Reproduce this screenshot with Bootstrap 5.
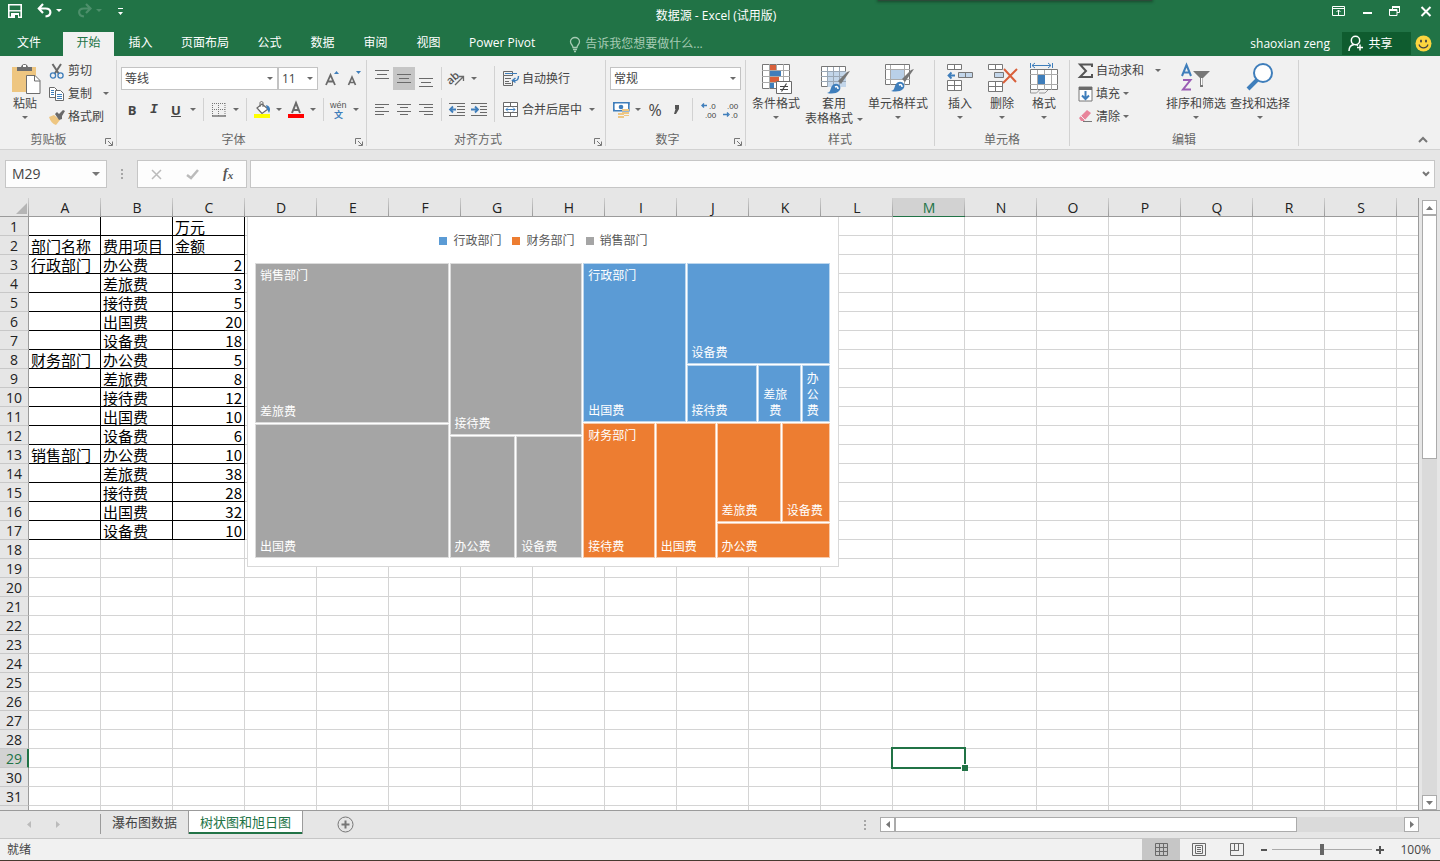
<!DOCTYPE html>
<html lang="zh-CN">
<head>
<meta charset="utf-8">
<meta name="viewport" content="width=device-width, initial-scale=1">
<title>数据源 - Excel (试用版)</title>
<link rel="stylesheet" href="https://cdn.jsdelivr.net/npm/bootstrap@5.3.0/dist/css/bootstrap.min.css">
<style>
:root{--green:#217346;--ink:#444;--ico:#6a6a6a;--blue:#3f7ebb}
body{font:12px/16px "Open Sans","Noto Sans CJK SC",sans-serif;color:var(--ink);background:#e6e6e6}
svg{display:block;flex:none;overflow:visible}
button,input,select{font:inherit;color:inherit}
.plain{border:0;background:none;padding:0;display:flex;align-items:center;justify-content:center;white-space:nowrap}
.app-head{background:var(--green);color:#fff}
.titlebar{height:32px}
.titlebar .side{flex:1 1 0}
.winbtns{padding-top:2px}
.desk-shadow{left:61%;width:19%;top:0;height:1px;background:#2b4a38;box-shadow:0 0 3px 1px #18492d}
.tabrow{height:24px}
.rtab{color:#fff;text-decoration:none;height:24px;line-height:22px;padding:0 14px;min-width:53px;text-align:center;white-space:nowrap}
.rtab.file{width:58px;margin-right:5px}
.rtab.on{background:#f1f1f1;color:var(--green);min-width:51px;padding:0 13px}
.tell{color:#a6cbb4;width:170px}
.tell input{border:0;background:none;padding:0;width:130px;color:inherit;outline:0}
.tell input::placeholder{color:#a6cbb4;opacity:1}
.share{background:#0f5c2f;width:69px;height:23px;padding-right:12px;gap:4px;color:#fff}
.ribbon{background:#f1f1f1;border-bottom:1px solid #d2d2d2;height:94px;padding:4px 0}
.rgroup{border-right:1px solid #d2d2d2;padding:0 4px;height:86px;flex:none;position:relative}
.rgroup.clip{padding-left:1px}
.rbody{height:74px}
.rname{height:12px;line-height:12px;text-align:center;color:#666;padding-right:16px}
.launch{position:absolute;right:3px;bottom:0}
.big{flex-direction:column;justify-content:flex-start;padding-top:3px;line-height:15px}
.big svg.pic{margin-bottom:1px}
.big>.caret{margin-top:2px}
.w42{width:42px}.w48{width:48px}.w52{width:52px}.w64{width:64px}
.smalls{gap:2px}
.smalls .plain{height:21px;gap:3px;justify-content:flex-start}
.tools{gap:8px;padding-top:7px}
.tools .line{height:23px;display:flex}
.tools .line>*{flex-shrink:0}
.tb{width:22px;height:23px}
.tb.on{background:#c6c6c6}
.glyph{font-size:13px}
.dd{width:12px;height:23px}
.dd::after,.caret::after{content:"";border:3px solid transparent;border-top-color:#6a6a6a;border-bottom:0}
.caret{display:flex;justify-content:center;align-items:center;height:9px}
.vr1{width:1px;margin:0 4px;background:#d2d2d2}
.vr1.long{height:56px;margin-top:6px}
.pick{border:1px solid #c3c3c3;border-radius:0;height:23px;padding:0 3px;appearance:none;outline:0;background:#fff url("data:image/svg+xml,%3Csvg xmlns='http://www.w3.org/2000/svg' width='6' height='3'%3E%3Cpath d='M0 0h6L3 3z' fill='%236a6a6a'/%3E%3C/svg%3E") no-repeat right 4px center}
.w157{width:157px}.w40{width:40px}.w131{width:131px}
.fx{height:48px;padding:10px 5px 10px}
.fxbox{border:1px solid #c6c6c6;background:#fdfdfd;height:28px}
.namebox{width:102px}
.namebox input{width:82px;border:0;background:none;padding:0 0 0 6px;font-size:14px;outline:0}
.fxbtns{width:110px}
.fxbtns .plain{flex:1}
.fxline{margin-left:3px}
.dots{width:30px;gap:2px}
.dots.slim{width:12px}
.dots i{width:2px;height:2px;background:#a6a6a6}
.work{min-height:0}
.gridwrap{overflow:hidden;position:relative;border-right:1px solid #9b9b9b;margin-right:3px;min-width:0}
.cells{table-layout:fixed;border-collapse:separate;border-spacing:0;width:1469px;background:#fff;font:15px/16px "Noto Sans CJK SC",sans-serif;color:#000}
.cells th,.cells td{height:19px;padding:2px 2px 0;border:0 solid #d4d4d4;border-width:0 1px 1px 0;white-space:nowrap}
.cells th{background:#e6e6e6;text-align:center;font:14px/16px "Open Sans",sans-serif;color:#222}
.cells thead th{border-bottom-color:#9b9b9b;border-right:0;background:linear-gradient(#d0d0d0,#9b9b9b) right/1px 100% no-repeat #e6e6e6}
.cells tbody th{border-right-color:#9b9b9b;border-bottom-color:#c8c8c8}
.cells thead th.hot{background-color:#d2d2d2;color:var(--green);border-bottom-color:var(--green)}
.cells tbody th.hot{background:#d2d2d2;color:var(--green);border-right:2px solid var(--green);padding-right:1px}
.cells td.filled{border-color:#000}
.cells td.num{text-align:right}
.cells td.cur{position:relative}
.cells td.cur::before{content:"";position:absolute;inset:-2px;border:2px solid var(--green)}
.cells td.cur::after{content:"";position:absolute;right:-4px;bottom:-4px;width:7px;height:7px;background:var(--green);border:1px solid #fff;border-width:1px 0 0 1px}
.chartbox{left:247px;top:19px;width:592px;height:350px;background:#fff;border:1px solid #d9d9d9;border-top:0;padding:16px 8px 8px 7px;color:#595959}
.legend{gap:11px;height:16px;margin-bottom:14px;padding-left:2px}
.legend span{display:flex;align-items:center;gap:6px}
.legend i{width:8px;height:8px}
.tree,.split{display:grid;min-width:0;min-height:0;gap:1px}
.tree{flex:1}
.tile{display:flex;flex-direction:column;justify-content:space-between;align-items:flex-start;border:1px solid #ffffff99;background-clip:border-box;padding:4px 4px 2px;min-width:0;min-height:0;color:#fff;text-align:center;white-space:pre}
.tile b{font-weight:400}
.c-a{background-color:#5b9bd5}.c-b{background-color:#ed7d31}.c-c{background-color:#a5a5a5}
.vscroll{width:15px;margin:2px 3px 0 0}
.sbtn{width:15px;height:15px;background:#fff;border:1px solid #ababab}
.track{background:#dadada}
.thumb{background:#fff;border:1px solid #ababab}
.vscroll .thumb{height:42%;width:15px}
.sheets{height:28px;border-top:1px solid #9b9b9b;font-size:13px}
.sheets .left{width:60%}
.shead{width:100px;padding-left:27px;gap:23px}
.stab{color:var(--ink);text-decoration:none;height:23px;line-height:22px;padding:0 11px;white-space:nowrap}
.stab.on{background:#fff;color:var(--green);border:solid #9b9b9b;border-width:0 1px;box-shadow:inset 0 -2px var(--green)}
.sline{width:1px;height:20px;margin-top:3px;background:#9b9b9b}
.hscroll{margin:6px 21px 0 0;height:15px;min-width:0}
.hscroll .thumb{width:79%;height:15px}
.status{background:#f1f1f1;border-top:1px solid #c6c6c6;border-bottom:1px solid #463a30;height:23px;padding:0 9px 0 7px}
.view{width:38px;height:21px}
.view.on{background:#c6c6c6}
.zoom{appearance:none;width:100px;height:12px;background:linear-gradient(#aaa,#aaa) center/100% 1px no-repeat;margin:0}
.zoom::-webkit-slider-thumb{appearance:none;width:4px;height:11px;background:#666}
</style>
</head>
<body class="vh-100 d-flex flex-column overflow-hidden">
<header class="app-head position-relative">
  <div class="desk-shadow position-absolute"></div>
  <div class="titlebar d-flex">
    <div class="side d-flex pt-1">
      <button class="plain ms-2 align-self-start" aria-label="保存"><svg width="14" height="14" fill="none" stroke="#fff"><path d="M.8.8h12.4v12.4H.8z" stroke-width="1.6"/><path d="M1 6.8h12" stroke-width="1.4"/><path d="M3 9h8v5H3z" fill="#fff" stroke="none"/><path d="M7 11h3v3H7z" fill="#217346" stroke="none"/></svg></button>
      <button class="plain ms-3 align-self-start" aria-label="撤消"><svg width="24" height="14" fill="none"><path d="M5 0 .8 4.500 5 9M1 4.500h6.500c6.500 0 6.500 7 0 8" stroke="#fff" stroke-width="2.200"/><path d="M18 5h6l-3 3z" fill="#fff"/></svg></button>
      <button class="plain ms-3 align-self-start" aria-label="恢复"><svg width="24" height="14" fill="none"><path d="m8 0 4.500 4.500L8 9M12 4.500H6c-6.500 0-6.500 7 0 8" stroke="#4d8f6b" stroke-width="2.200"/><path d="M18 5h6l-3 3z" fill="#4d8f6b"/></svg></button>
      <button class="plain ms-3 align-self-start pt-1" aria-label="自定义快速访问工具栏"><svg width="5" height="8" fill="#fff"><path d="M0 0h5v1H0zM0 4h5L2.500 7z"/></svg></button>
    </div>
    <div class="lh-lg pt-1">数据源 - Excel (试用版)</div>
    <div class="side winbtns d-flex justify-content-end align-items-start pe-2 gap-3">
      <button class="plain pt-1" aria-label="功能区显示选项"><svg width="13" height="10" fill="none" stroke="#fff"><path d="M.5.5h12v9H.5zM.5 2.500h12M6.500 9V4M4.500 6l2-2 2 2"/></svg></button>
      <button class="plain pt-2" aria-label="最小化"><svg width="12" height="6"><path d="M2 2h9v2H2z" fill="#fff"/></svg></button>
      <button class="plain pt-1" aria-label="还原"><svg width="11" height="10" fill="none" stroke="#fff"><path d="M3.500 3V.5h7v6H8M.5 3.500H8v6H.5z"/><path d="M3 1h8M0 4h8" stroke-width="2"/></svg></button>
      <button class="plain ms-1 pt-1" aria-label="关闭"><svg width="12" height="11" fill="none" stroke="#fff" stroke-width="2"><path d="m1.500 1 9 9m0-9-9 9"/></svg></button>
    </div>
  </div>
  <nav class="tabrow d-flex align-items-start">
    <a class="rtab file" href="#">文件</a><a class="rtab on" href="#">开始</a><a class="rtab" href="#">插入</a><a class="rtab" href="#">页面布局</a><a class="rtab" href="#">公式</a><a class="rtab" href="#">数据</a><a class="rtab" href="#">审阅</a><a class="rtab" href="#">视图</a><a class="rtab" href="#">Power Pivot</a>
    <label class="tell d-flex align-items-center ms-3 ps-1 pt-1 gap-1"><svg width="12" height="15" fill="none" stroke="#a6cbb4"><path d="M4 10.500C4 8 1.500 7.500 1.500 4.800a4.500 4.300 0 0 1 9 0C10.500 7.500 8 8 8 10.500zM4 12.500h4M5 14.500h2" stroke-width="1.300"/></svg><input type="text" placeholder="告诉我您想要做什么..." aria-label="告诉我您想要做什么"></label>
    <div class="ms-auto d-flex">
      <a class="text-white text-decoration-none me-2 pe-1 pt-1" href="#">shaoxian zeng</a>
      <button class="plain share"><svg width="16" height="17" fill="none" stroke="#fff" stroke-width="1.500"><circle cx="7.500" cy="5.500" r="4.200"/><path d="M1 16c0-4 2-6 5-6.500M8.500 9.700l1.500.8M12 9.500v6M9 12.500h6"/></svg>共享</button>
      <button class="plain ms-1 me-1 pe-1" aria-label="反馈"><svg width="17" height="17"><circle cx="8.500" cy="8.500" r="8" fill="#fcd53f"/><ellipse cx="6" cy="6" rx="1" ry="1.500" fill="#444"/><ellipse cx="11" cy="6" rx="1" ry="1.500" fill="#444"/><path d="M4 9.500c1.500 4.500 7.500 4.500 9 0" fill="none" stroke="#444" stroke-width="1.200"/></svg></button>
    </div>
  </nav>
</header>

<section class="ribbon d-flex" aria-label="功能区">
  <div class="rgroup clip" style="width:117px">
    <div class="rbody d-flex">
      <button class="plain big w48 align-self-start"><svg class="pic" width="32" height="32"><path d="M3 4h24v25H3z" fill="#eec681"/><path d="M8 8V4h4c1-4 6-4 7 0h4v4z" fill="#6d6d6d"/><path d="M14 2h3v2h-3z" fill="#fff"/><path d="M17.500 12.500H26l5 5v13H17.500z" fill="#fff" stroke="#6d6d6d"/><path d="M25.500 12.500V18H31" fill="none" stroke="#6d6d6d"/></svg>粘贴<span class="caret"></span></button>
      <div class="smalls d-flex flex-column">
        <button class="plain"><svg width="16" height="16" fill="none"><path d="M3.500 1 10 11M12 1 5.500 11" stroke="#6a6a6a" stroke-width="2"/><circle cx="4" cy="12.500" r="2.600" stroke="#3f7ebb" stroke-width="1.300"/><circle cx="11.500" cy="12.500" r="2.600" stroke="#3f7ebb" stroke-width="1.300"/></svg>剪切</button>
        <button class="plain"><svg width="16" height="16" fill="#fff" stroke="#6a6a6a"><path d="M.5 1.500h5l3 3v7h-8z"/><path d="M6.500 4.500h5l3 3v7h-8z"/><path d="M2 4.500h3M2 6.500h3M2 8.500h3M8 8.500h5M8 10.500h5M8 12.500h5" stroke="#3f7ebb"/></svg>复制<span class="caret ps-2"></span></button>
        <button class="plain"><svg width="16" height="16"><path d="m0 8 5-2 6 5-4 5C4 15 1 12 0 8z" fill="#eec681"/><path d="m6 5 2-2 2 2 4-4 2 1-3 5 0 3-3 1z" fill="#6a6a6a"/></svg>格式刷</button>
      </div>
    </div>
    <div class="rname">剪贴板</div><svg class="launch" width="8" height="8" fill="none" stroke="#777"><path d="M.5 6V.5H6M3 3l4 4M7.500 3.500v4h-4"/></svg>
  </div>

  <div class="rgroup" style="width:250px">
    <div class="rbody d-flex flex-column tools">
      <div class="line"><select class="pick w157" aria-label="字体"><option>等线</option></select><select class="pick w40" aria-label="字号"><option>11</option></select>
        <button class="plain tb ms-1" aria-label="增大字号"><svg width="18" height="16" fill="none" stroke="#6a6a6a" stroke-width="1.800"><path d="m2 14 4.500-10L11 14M3.500 10.500h6"/><path d="M10 3h5l-2.500-3z" fill="#3f7ebb" stroke="none"/></svg></button>
        <button class="plain tb" aria-label="减小字号"><svg width="18" height="16" fill="none" stroke="#6a6a6a" stroke-width="1.700"><path d="m2.500 14 3.500-8 3.500 8M4 11.500h4"/><path d="M10 0h5l-2.500 3z" fill="#3f7ebb" stroke="none"/></svg></button></div>
      <div class="line">
        <button class="plain tb glyph fw-bold" aria-label="加粗">B</button><button class="plain tb glyph fst-italic fw-bold font-monospace" aria-label="倾斜">I</button><button class="plain tb glyph fw-bold text-decoration-underline" aria-label="下划线">U</button><button class="plain dd" aria-label="下划线选项"></button><span class="vr1"></span>
        <button class="plain tb" aria-label="边框"><svg width="14" height="14" fill="none" stroke="#777"><path d="M0 .5h14M0 6.500h14M.5 0v13M6.500 0v13M13 0v13" stroke-dasharray="1 1"/><path d="M0 13h14" stroke-width="1.500"/></svg></button><button class="plain dd" aria-label="边框选项"></button><span class="vr1"></span>
        <button class="plain tb" aria-label="填充颜色"><svg width="17" height="17"><path d="m3 7 5-4 6 5-6 4.500z" fill="#fff" stroke="#6a6a6a" stroke-width="1.200"/><path d="M6 6V2c0-2 3-2 3 0v4" fill="none" stroke="#6a6a6a"/><path d="M12 4c4 1 5 4 3 8l-2-4z" fill="#3f7ebb"/><path d="M0 13h16v4H0z" fill="#ff0"/></svg></button><button class="plain dd" aria-label="填充颜色选项"></button>
        <button class="plain tb" aria-label="字体颜色"><svg width="16" height="17"><path d="M4 12 8 2l4 10M5.500 9h5" fill="none" stroke="#6a6a6a" stroke-width="2"/><path d="M0 13h16v4H0z" fill="red"/></svg></button><button class="plain dd" aria-label="字体颜色选项"></button><span class="vr1"></span>
        <button class="plain tb" aria-label="拼音"><svg width="18" height="20"><text x="0" y="8" font-size="9" font-family="Liberation Sans" fill="#555">wén</text><text x="4" y="18" font-size="9" font-weight="700" fill="#3f7ebb">文</text></svg></button><button class="plain dd" aria-label="拼音选项"></button>
      </div>
    </div>
    <div class="rname">字体</div><svg class="launch" width="8" height="8" fill="none" stroke="#777"><path d="M.5 6V.5H6M3 3l4 4M7.500 3.500v4h-4"/></svg>
  </div>

  <div class="rgroup" style="width:239px">
    <div class="rbody d-flex">
      <div class="d-flex flex-column tools">
        <div class="line">
          <button class="plain tb" aria-label="顶端对齐"><svg width="14" height="17" stroke="#6a6a6a"><path d="M0 .5h14M2 4.500h10M0 8.500h14"/></svg></button><button class="plain tb on" aria-label="垂直居中"><svg width="14" height="17" stroke="#6a6a6a"><path d="M0 4.500h14M2 8.500h10M0 12.500h14"/></svg></button><button class="plain tb" aria-label="底端对齐"><svg width="14" height="17" stroke="#6a6a6a"><path d="M0 8.500h14M2 12.500h10M0 16.500h14"/></svg></button><span class="vr1"></span>
          <button class="plain tb" aria-label="方向"><svg width="20" height="20"><text x="0" y="12" font-size="11" font-weight="600" fill="#555" transform="rotate(-42 7 10)">ab</text><path d="m8 16 8-8M12 7.500h4.500V12" stroke="#6a6a6a" fill="none" stroke-width="1.300"/></svg></button><button class="plain dd" aria-label="方向选项"></button>
        </div>
        <div class="line">
          <button class="plain tb" aria-label="左对齐"><svg width="14" height="12" stroke="#6a6a6a"><path d="M0 .5h14M0 3.500h9M0 7.500h14M0 10.500h9"/></svg></button><button class="plain tb" aria-label="居中"><svg width="14" height="12" stroke="#6a6a6a"><path d="M0 .5h14M3 3.500h8M0 7.500h14M3 10.500h8"/></svg></button><button class="plain tb" aria-label="右对齐"><svg width="14" height="12" stroke="#6a6a6a"><path d="M0 .5h14M5 3.500h9M0 7.500h14M5 10.500h9"/></svg></button><span class="vr1"></span>
          <button class="plain tb" aria-label="减少缩进量"><svg width="16" height="13" stroke="#6a6a6a"><path d="M0 .5h16M8 3.500h8M8 6.500h8M8 9.500h8M0 12.500h16"/><path d="M7 6.500H2M4 3.500l-3 3 3 3" stroke="#3f7ebb" stroke-width="1.800" fill="none"/></svg></button><button class="plain tb" aria-label="增加缩进量"><svg width="16" height="13" stroke="#6a6a6a"><path d="M0 .5h16M9 3.500h7M9 6.500h7M9 9.500h7M0 12.500h16"/><path d="M0 6.500h6M4 3.500l3 3-3 3" stroke="#3f7ebb" stroke-width="1.800" fill="none"/></svg></button>
        </div>
      </div>
      <span class="vr1 long"></span>
      <div class="d-flex flex-column tools ps-1">
        <div class="line"><button class="plain gap-1"><svg width="15" height="16" fill="none" stroke="#6a6a6a"><path d="M.5.5h9v4h-9zM.5 4.500v10h9v-5M2 7.500h6M2 10.500h4M2 12.500h6"/><path d="M2 2.500h12" stroke="#3f7ebb"/><path d="M15.500 5c0 4-2 5-5 4.500M12.500 7l-3 2.500 3 2" stroke="#3f7ebb" stroke-width="1.400"/></svg>自动换行</button></div>
        <div class="line"><button class="plain gap-1"><svg width="15" height="15" fill="#fff" stroke="#6a6a6a"><path d="M.5.5h14v14H.5zM.5 4.500h14M.5 10.500h14M7.500 0v4M7.500 11v4"/><path d="M3 7.500h9M5 5.500l-2 2 2 2M10 5.500l2 2-2 2" fill="none" stroke="#3f7ebb"/></svg>合并后居中</button><button class="plain dd ms-1" aria-label="合并选项"></button></div>
      </div>
    </div>
    <div class="rname">对齐方式</div><svg class="launch" width="8" height="8" fill="none" stroke="#777"><path d="M.5 6V.5H6M3 3l4 4M7.500 3.500v4h-4"/></svg>
  </div>

  <div class="rgroup" style="width:140px">
    <div class="rbody d-flex flex-column tools">
      <div class="line"><select class="pick w131" aria-label="数字格式"><option>常规</option></select></div>
      <div class="line">
        <button class="plain tb" aria-label="会计数字格式"><svg width="17" height="16"><path d="M.8.8h15v8H.8z" fill="#fff" stroke="#3f7ebb" stroke-width="1.600"/><circle cx="8" cy="5" r="2.300" fill="#3f7ebb"/><path d="M0 0h3L0 3zM16.500 0v3l-3-3zM0 9V6l3 3z" fill="#3f7ebb"/><path d="M9 7h7v2H9zM9 10h7v2H9zM5 11h6v2H5zM5 14h6v2H5zM11 13h5v1h-5z" fill="#eec681"/></svg></button><button class="plain dd" aria-label="会计格式选项"></button><button class="plain tb fs-6" aria-label="百分比">%</button><button class="plain tb" aria-label="千位分隔"><svg width="6" height="9"><path d="M1 0h4v4L2 9H0l1.500-5H1z" fill="#555"/></svg></button><span class="vr1"></span>
        <button class="plain tb" aria-label="增加小数位数"><svg width="15" height="18" font-size="8" font-family="Liberation Sans" fill="#444"><text x="8" y="8">.0</text><text x="4" y="17">.00</text><path d="M6 4.500H1M3 2.500l-2 2 2 2" stroke="#3f7ebb" stroke-width="1.400" fill="none"/></svg></button><button class="plain tb" aria-label="减少小数位数"><svg width="15" height="18" font-size="8" font-family="Liberation Sans" fill="#444"><text x="4" y="8">.00</text><text x="8" y="17">.0</text><path d="M0 13.500h5M4 11.500l2 2-2 2" stroke="#3f7ebb" stroke-width="1.400" fill="none"/></svg></button>
      </div>
    </div>
    <div class="rname">数字</div><svg class="launch" width="8" height="8" fill="none" stroke="#777"><path d="M.5 6V.5H6M3 3l4 4M7.500 3.500v4h-4"/></svg>
  </div>

  <div class="rgroup" style="width:189px">
    <div class="rbody d-flex align-items-start">
      <button class="plain big w52"><svg class="pic" width="32" height="32"><path d="M2.500 1.500h27v24h-27z" fill="#fff" stroke="#777"/><path d="M2 7.500h28M2 13.500h28M2 19.500h28M9.500 1v25M16.500 1v25M23.500 1v25" stroke="#aaa"/><path d="M10 2h6v5h-6zM10 14h9v5h-9z" fill="#d9603b"/><path d="M10 8h11v5H10zM10 20h4v5h-4z" fill="#3f7ebb"/><path d="M16.500 18.500h15v12h-15z" fill="#fff" stroke="#6a6a6a"/><path d="M20 23.500h8M20 26.500h8M26.500 20.500l-5 8" stroke="#444" stroke-width="1.200"/></svg>条件格式<span class="caret"></span></button>
      <button class="plain big w64"><svg class="pic" width="32" height="32"><path d="M3.500 3.500h24v20h-24z" fill="#fff" stroke="#777"/><path d="M10 9h18v15H10z" fill="#c3d6ea"/><path d="M3 8.500h25M3 13.500h25M3 18.500h25M9.500 4v20M15.500 4v20M21.500 4v20" stroke="#9aa7b5"/><path d="m32 8-9 13-3-3 9-9z" fill="#777"/><path d="M9 30c4-1 3-4 5-7 2-3 6-3 8 0 2 5-4 9-13 7z" fill="#3f7ebb"/><path d="M17 24c2-1 3 0 3 2" stroke="#fff" fill="none" stroke-width="1.500"/></svg>套用<span class="d-flex">表格格式<i class="caret ps-1 pt-2"></i></span></button>
      <button class="plain big w64"><svg class="pic" width="32" height="32"><path d="M3.500 1.500h24v20h-24z" fill="#fff" stroke="#777"/><path d="M3 6.500h25M3 16.500h25M8.500 2v20M22.500 2v20" stroke="#aaa"/><path d="M9 7h13v9H9z" fill="#b9d0e8"/><path d="m32 6-9 13-3-3 9-9z" fill="#777"/><path d="M9 28c4-1 3-4 5-7 2-3 6-3 8 0 2 5-4 9-13 7z" fill="#3f7ebb"/><path d="M17 22c2-1 3 0 3 2" stroke="#fff" fill="none" stroke-width="1.500"/></svg>单元格样式<span class="caret"></span></button>
    </div>
    <div class="rname pe-0">样式</div>
  </div>

  <div class="rgroup" style="width:135px">
    <div class="rbody d-flex align-items-start">
      <button class="plain big w42"><svg class="pic" width="32" height="32" fill="#fff" stroke="#777"><path d="M3.500 1.500h14v5h-14zM10.500 1v6M3.500 17.500h14v10h-14zM10.500 17v11M3 22.500h15"/><path d="M14.500 9.500h14v5h-14zM21.500 9v6" fill="#c3d6ea"/><path d="M11 12.500H5M7.500 9.500l-3 3 3 3" stroke="#3f7ebb" stroke-width="1.800" fill="none"/></svg>插入<span class="caret"></span></button>
      <button class="plain big w42"><svg class="pic" width="32" height="32" fill="#fff" stroke="#777"><path d="M2.500 1.500h14v5h-14zM9.500 1v6M2.500 18.500h14v10h-14zM9.500 18v11M2 23.500h15"/><path d="M8.500 9.500h9v5h-9z" fill="#c3d6ea"/><path d="m18 6 12 13M31 6 17 20" stroke="#d9603b" stroke-width="2" fill="none"/></svg>删除<span class="caret"></span></button>
      <button class="plain big w42"><svg class="pic" width="32" height="32" fill="none" stroke="#777"><path d="M2.500 6.500h27v20h-27z" fill="#fff"/><path d="M2 11.500h28M2 21.500h28M9.500 7v20M16.500 7v20M23.500 7v20" stroke="#aaa"/><path d="M10 12h7v9h-7z" fill="#3f7ebb" stroke="none"/><path d="M2.500 0v5M24.500 0v5M4 2.500h19M7 0 4 2.500 7 5M20 0l3 2.500L20 5" stroke="#3f7ebb"/><path d="M2.500 27v3h6l3-3M11 30h6l3-3" stroke="#999"/></svg>格式<span class="caret"></span></button>
    </div>
    <div class="rname pe-0">单元格</div>
  </div>

  <div class="rgroup" style="width:229px">
    <div class="rbody d-flex align-items-start">
      <div class="smalls d-flex flex-column ps-1" style="width:90px">
        <button class="plain"><svg width="15" height="16"><path d="M14 4V1.500H2L8 8l-6 6h12v-3" fill="none" stroke="#555" stroke-width="2"/></svg>自动求和<span class="caret ps-2"></span></button>
        <button class="plain"><svg width="15" height="16" fill="#fff"><path d="M1 1h13v14H1z" stroke="#777"/><path d="M1 1h13v3H1z" fill="#6a6a6a"/><path d="M7.500 5v8M4 9.500l3.500 3.500L11 9.500" fill="none" stroke="#3f7ebb" stroke-width="2"/></svg>填充<span class="caret"></span></button>
        <button class="plain"><svg width="15" height="16"><path d="m1 9 8-8 4 3-7 8H3z" fill="#e8849a"/><path d="m3 7 4 4" stroke="#f1f1f1"/><path d="M5 12.500h9" stroke="#777"/></svg>清除<span class="caret"></span></button>
      </div>
      <button class="plain big w64"><svg class="pic" width="32" height="32" fill="none"><path d="m2 13 4.500-11L11 13M3.500 9.500h6" stroke="#3f7ebb" stroke-width="2"/><path d="M3 17h7.500L3 26.500h8" stroke="#9a5cb4" stroke-width="2"/><path d="M13 8h17l-7 7v9h-3v-9z" fill="#777"/><path d="M21 15h1.500v7H21z" fill="#fff"/></svg>排序和筛选<span class="caret"></span></button>
      <button class="plain big w64"><svg class="pic" width="32" height="32"><circle cx="19" cy="10" r="9" fill="#fff" stroke="#3f7ebb" stroke-width="2"/><path d="M13 17 4 26" stroke="#3f7ebb" stroke-width="4"/></svg>查找和选择<span class="caret"></span></button>
    </div>
    <div class="rname pe-0">编辑</div>
  </div>
  <button class="plain ms-auto align-self-end me-2 pe-1 mb-0" aria-label="折叠功能区"><svg width="10" height="9" fill="none" stroke="#777" stroke-width="2"><path d="m1 6 4-4 4 4"/></svg></button>
</section>

<section class="fx d-flex" aria-label="编辑栏">
  <div class="fxbox namebox d-flex"><input type="text" value="M29" aria-label="名称框"><button class="plain ps-1" aria-label="名称列表"><svg width="8" height="4"><path d="M0 0h8L4 4z" fill="#777"/></svg></button></div>
  <div class="dots d-flex flex-column align-items-center justify-content-center"><i></i><i></i><i></i></div>
  <div class="fxbox fxbtns d-flex"><button class="plain" aria-label="取消"><svg width="11" height="11" stroke="#bbb" stroke-width="1.500"><path d="m1 1 9 9M10 1l-9 9"/></svg></button><button class="plain" aria-label="输入"><svg width="13" height="11" fill="none" stroke="#bbb" stroke-width="2.500"><path d="m1 6 4 3 7-8"/></svg></button><button class="plain" aria-label="插入函数"><svg width="13" height="16"><text x="1" y="12" font-family="Liberation Serif" font-style="italic" font-weight="700" font-size="14" fill="#555">f<tspan font-size="11" dy="1">x</tspan></text></svg></button></div>
  <div class="fxbox fxline flex-grow-1 d-flex"><input class="flex-grow-1 border-0 bg-transparent" type="text" aria-label="公式"><button class="plain pe-1" aria-label="展开编辑栏"><svg width="8" height="6" fill="none" stroke="#777" stroke-width="2"><path d="m1 1 3 3 3-3"/></svg></button></div>
</section>

<main class="work flex-grow-1 d-flex">
  <div class="gridwrap flex-grow-1">
    <table class="cells" id="cells"></table>
    <figure class="chartbox position-absolute m-0 d-flex flex-column">
      <div class="legend d-flex justify-content-center"><span><i class="c-a"></i>行政部门</span><span><i class="c-b"></i>财务部门</span><span><i class="c-c"></i>销售部门</span></div>
      <div class="tree d-grid" id="tree"></div>
    </figure>
  </div>
  <div class="vscroll d-flex flex-column">
    <button class="plain sbtn" aria-label="向上滚动"><svg width="7" height="4"><path d="M0 4h7L3.500 0z" fill="#777"/></svg></button>
    <div class="track flex-grow-1"><div class="thumb"></div></div>
    <button class="plain sbtn" aria-label="向下滚动"><svg width="7" height="4"><path d="M0 0h7L3.500 4z" fill="#777"/></svg></button>
  </div>
</main>

<nav class="sheets d-flex flex-shrink-0">
  <div class="left d-flex">
    <div class="shead d-flex align-items-center"><svg width="5" height="7"><path d="M4 0v7L0 3.500z" fill="#bbb"/></svg><svg width="5" height="7"><path d="M1 0v7l4-3.500z" fill="#bbb"/></svg></div>
    <span class="sline"></span><a class="stab" href="#">瀑布图数据</a><a class="stab on" href="#">树状图和旭日图</a>
    <button class="plain ms-4 ps-2" aria-label="新工作表"><svg width="19" height="17" fill="none" stroke="#777"><circle cx="10.500" cy="8.500" r="7.500"/><path d="M10.500 4.500v8M6.500 8.500h8" stroke-width="2"/></svg></button>
  </div>
  <div class="dots slim d-flex flex-column align-items-start justify-content-center flex-shrink-0"><i></i><i></i><i></i></div>
  <div class="hscroll d-flex flex-grow-1 ms-1">
    <button class="plain sbtn" aria-label="向左滚动"><svg width="4" height="7"><path d="M4 0v7L0 3.500z" fill="#777"/></svg></button>
    <div class="track flex-grow-1"><div class="thumb"></div></div>
    <button class="plain sbtn" aria-label="向右滚动"><svg width="4" height="7"><path d="M0 0v7l4-3.500z" fill="#777"/></svg></button>
  </div>
</nav>

<footer class="status d-flex align-items-center flex-shrink-0">
  <span class="me-auto">就绪</span>
  <button class="plain view on" aria-label="普通"><svg width="13" height="13" fill="none" stroke="#6a6a6a"><path d="M.5.5h12v12H.5zM0 4.500h13M0 8.500h13M4.500 0v13M8.500 0v13"/></svg></button><button class="plain view" aria-label="页面布局"><svg width="14" height="13" fill="none" stroke="#6a6a6a"><path d="M.5.5h13v12H.5zM3.500 2.500h7v8h-7zM5 4.500h4M5 6.500h4M5 8.500h4"/></svg></button><button class="plain view" aria-label="分页预览"><svg width="14" height="13" fill="none" stroke="#6a6a6a"><path d="M.5.5h13v12H.5zM4.500 0v7M8.500 0v7M0 7.500h9"/></svg></button>
  <button class="plain ms-1" aria-label="缩小"><svg width="8" height="8"><path d="M1 3h6v2H1z" fill="#555"/></svg></button>
  <input class="zoom mx-1" type="range" min="0" max="100" value="50" aria-label="显示比例">
  <button class="plain" aria-label="放大"><svg width="8" height="8"><path d="M0 3h8v2H0zM3 0h2v8H3z" fill="#555"/></svg></button>
  <span class="ms-3">100%</span>
</footer>

<script src="https://cdn.jsdelivr.net/npm/bootstrap@5.3.0/dist/js/bootstrap.bundle.min.js"></script>
<script>
// Sheet contents: department, expense item, amount (row 1 is the unit row)
const sheet = [
  ['', '', '万元'], ['部门名称', '费用项目', '金额'],
  ['行政部门', '办公费', 2], ['', '差旅费', 3], ['', '接待费', 5], ['', '出国费', 20], ['', '设备费', 18],
  ['财务部门', '办公费', 5], ['', '差旅费', 8], ['', '接待费', 12], ['', '出国费', 10], ['', '设备费', 6],
  ['销售部门', '办公费', 10], ['', '差旅费', 38], ['', '接待费', 28], ['', '出国费', 32], ['', '设备费', 10]
];
const columns = [...'ABCDEFGHIJKLMNOPQRST'], rowCount = 32;
const current = { col: 12, row: 28 };
let html = '<colgroup><col style="width:29px">' + '<col style="width:72px">'.repeat(columns.length) + '</colgroup><thead><tr><th aria-label="全选"><svg width="11" height="11" class="ms-auto"><path d="M11 0v11H0z" fill="#b5b5b5"/></svg></th>' +
  columns.map((c, i) => `<th class="${i === current.col ? 'hot' : ''}">${c}</th>`).join('') + '</tr></thead><tbody>';
for (let r = 0; r < rowCount; r++) {
  html += `<tr><th class="${r === current.row ? 'hot' : ''}">${r + 1}</th>`;
  columns.forEach((_, c) => {
    const v = sheet[r] && c < 3 ? sheet[r][c] : null;
    const cls = [v !== null ? 'filled' : '', typeof v === 'number' ? 'num' : '', r === current.row && c === current.col ? 'cur' : ''].join(' ').trim();
    html += `<td${cls ? ` class="${cls}"` : ''}>${v ?? ''}</td>`;
  });
  html += '</tr>';
}
document.getElementById('cells').innerHTML = html + '</tbody>';

// Treemap: a leaf is [colour, label, value, department?]; a branch is {dir, kids}
const row = (...kids) => ({ dir: 'columns', kids }), col = (...kids) => ({ dir: 'rows', kids });
const map = row(
  row(col(['c', '差旅费', 38, '销售部门'], ['c', '出国费', 32]),
      col(['c', '接待费', 28], row(['c', '办公费', 10], ['c', '设备费', 10]))),
  col(row(['a', '出国费', 20, '行政部门'], col(['a', '设备费', 18], row(['a', '接待费', 5], ['a', '差旅\n费', 3], ['a', '办\n公\n费', 2]))),
      row(['b', '接待费', 12, '财务部门'], ['b', '出国费', 10], col(row(['b', '差旅费', 8], ['b', '设备费', 6]), ['b', '办公费', 5]))));
const total = n => Array.isArray(n) ? n[2] : n.kids.reduce((s, k) => s + total(k), 0);
const template = n => `grid-template-${n.dir}:${n.kids.map(k => `minmax(0,${total(k)}fr)`).join(' ')}`;
const draw = n => Array.isArray(n)
  ? `<div class="tile c-${n[0]}">${n[3] ? `<b>${n[3]}</b>` : ''}<span class="mt-auto">${n[1]}</span></div>`
  : `<div class="split" style="${template(n)}">${n.kids.map(draw).join('')}</div>`;
document.getElementById('tree').innerHTML = draw(map);
</script>
</body>
</html>
